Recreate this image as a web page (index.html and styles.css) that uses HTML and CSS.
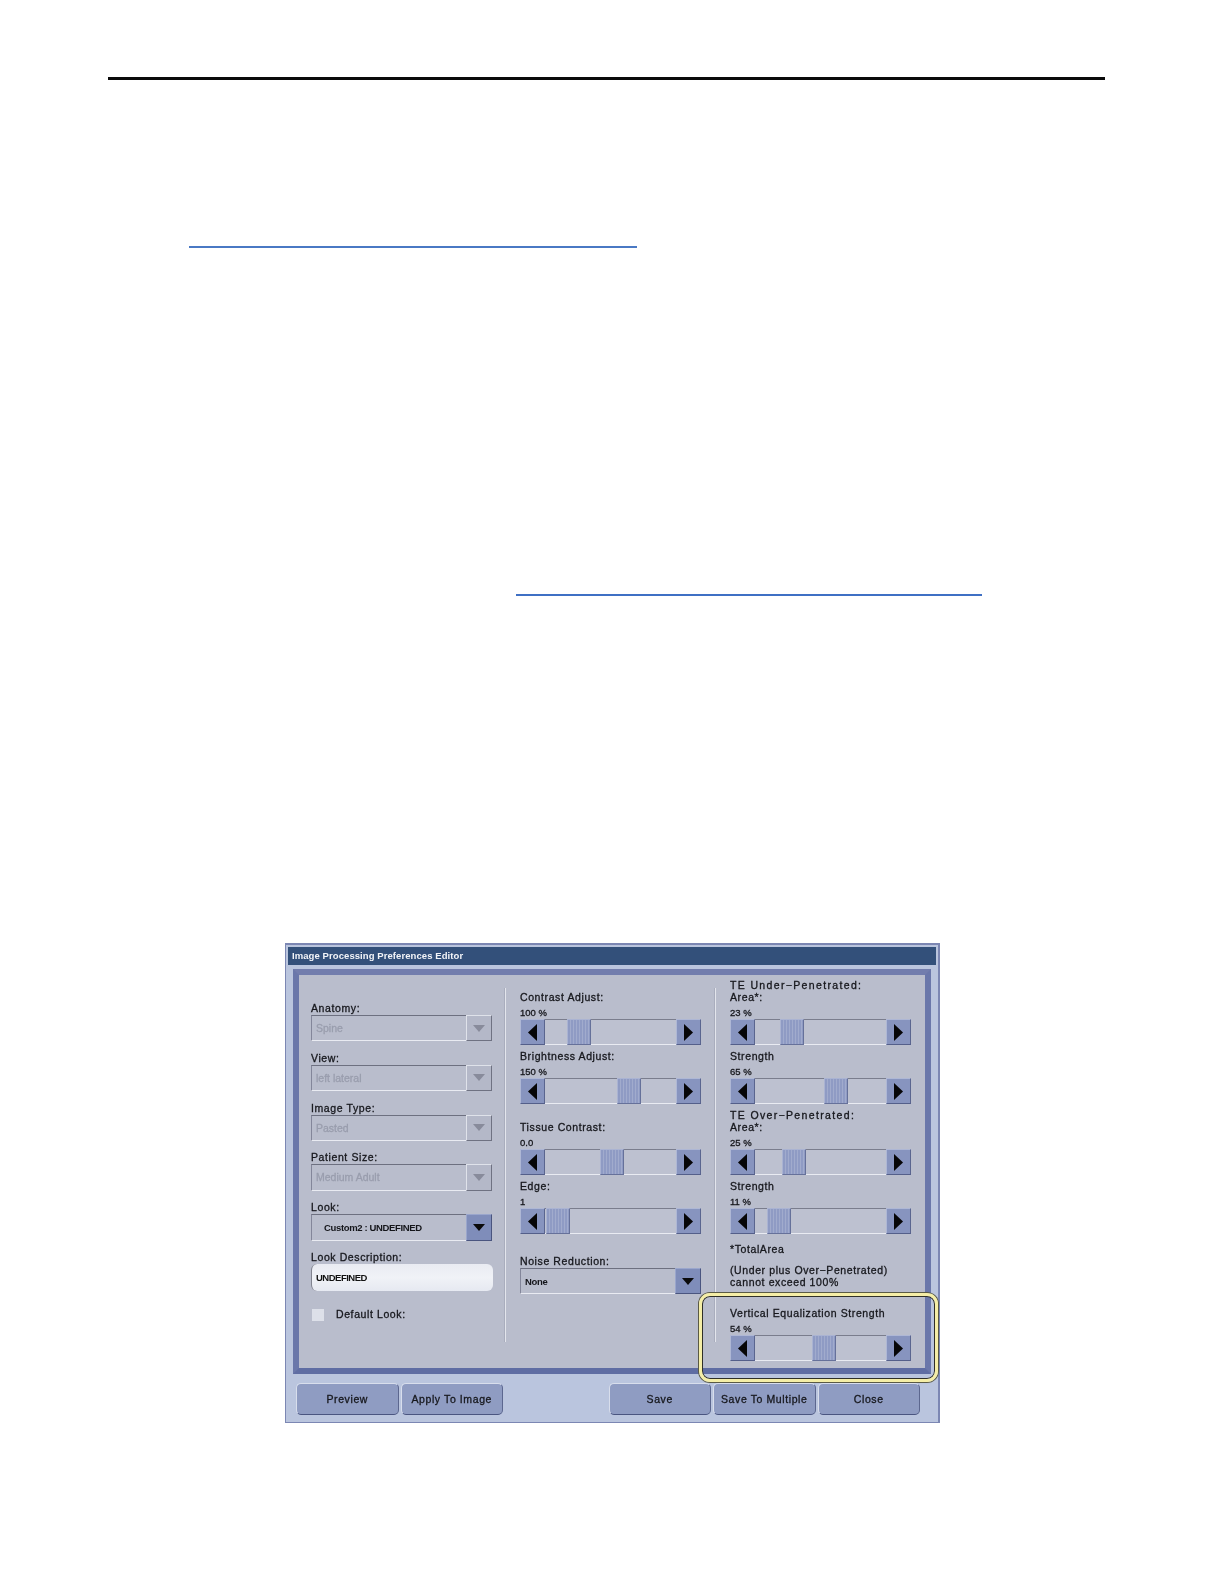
FILE: index.html
```html
<!DOCTYPE html>
<html lang="en">
<head>
<meta charset="utf-8">
<title>Image Processing Preferences Editor</title>
<link rel="stylesheet" href="styles.css">
</head>
<body>
<div class="page">
  <hr class="head-rule">
  <a class="link-rule link-one"></a>
  <a class="link-rule link-two"></a>

  <section class="dialog">
    <div class="titlebar">Image Processing Preferences Editor</div>
    <div class="panel">
      <div class="col col-left">
        <div class="field"><div class="lbl">Anatomy:</div>
          <div class="combo off"><span class="combo-text">Spine</span><span class="combo-btn"><svg width="12" height="7" viewBox="0 0 12 7"><polygon points="0,0 12,0 6,7"/></svg></span></div></div>
        <div class="field"><div class="lbl">View:</div>
          <div class="combo off"><span class="combo-text">left lateral</span><span class="combo-btn"><svg width="12" height="7" viewBox="0 0 12 7"><polygon points="0,0 12,0 6,7"/></svg></span></div></div>
        <div class="field"><div class="lbl">Image Type:</div>
          <div class="combo off"><span class="combo-text">Pasted</span><span class="combo-btn"><svg width="12" height="7" viewBox="0 0 12 7"><polygon points="0,0 12,0 6,7"/></svg></span></div></div>
        <div class="field"><div class="lbl">Patient Size:</div>
          <div class="combo off"><span class="combo-text">Medium Adult</span><span class="combo-btn"><svg width="12" height="7" viewBox="0 0 12 7"><polygon points="0,0 12,0 6,7"/></svg></span></div></div>
        <div class="field"><div class="lbl">Look:</div>
          <div class="combo on"><span class="combo-text indent">Custom2 : UNDEFINED</span><span class="combo-btn"><svg width="12" height="7" viewBox="0 0 12 7"><polygon points="0,0 12,0 6,7"/></svg></span></div></div>
        <div class="field"><div class="lbl">Look Description:</div>
          <div class="textbox">UNDEFINED</div></div>
        <label class="check"><span class="box"></span><span class="lbl">Default Look:</span></label>
      </div>

      <div class="divider"></div>

      <div class="col col-mid">
        <div class="group"><div class="lbl">Contrast Adjust:</div><div class="pct">100 %</div>
          <div class="slider"><span class="sbtn"><svg width="9" height="17" viewBox="0 0 9 17"><polygon points="9,0 9,17 0,8.5"/></svg></span><span class="track"><span class="thumb" style="margin-left:22px"></span></span><span class="sbtn"><svg width="9" height="17" viewBox="0 0 9 17"><polygon points="0,0 0,17 9,8.5"/></svg></span></div></div>
        <div class="group near"><div class="lbl">Brightness Adjust:</div><div class="pct">150 %</div>
          <div class="slider"><span class="sbtn"><svg width="9" height="17" viewBox="0 0 9 17"><polygon points="9,0 9,17 0,8.5"/></svg></span><span class="track"><span class="thumb" style="margin-left:72px"></span></span><span class="sbtn"><svg width="9" height="17" viewBox="0 0 9 17"><polygon points="0,0 0,17 9,8.5"/></svg></span></div></div>
        <div class="group far"><div class="lbl">Tissue Contrast:</div><div class="pct">0.0</div>
          <div class="slider"><span class="sbtn"><svg width="9" height="17" viewBox="0 0 9 17"><polygon points="9,0 9,17 0,8.5"/></svg></span><span class="track"><span class="thumb" style="margin-left:55px"></span></span><span class="sbtn"><svg width="9" height="17" viewBox="0 0 9 17"><polygon points="0,0 0,17 9,8.5"/></svg></span></div></div>
        <div class="group near"><div class="lbl">Edge:</div><div class="pct">1</div>
          <div class="slider"><span class="sbtn"><svg width="9" height="17" viewBox="0 0 9 17"><polygon points="9,0 9,17 0,8.5"/></svg></span><span class="track"><span class="thumb" style="margin-left:1px"></span></span><span class="sbtn"><svg width="9" height="17" viewBox="0 0 9 17"><polygon points="0,0 0,17 9,8.5"/></svg></span></div></div>
        <div class="noise"><div class="lbl">Noise Reduction:</div>
          <div class="combo on"><span class="combo-text">None</span><span class="combo-btn"><svg width="12" height="7" viewBox="0 0 12 7"><polygon points="0,0 12,0 6,7"/></svg></span></div></div>
      </div>

      <div class="divider"></div>

      <div class="col col-right">
        <div class="lbl heading">TE Under&#8722;Penetrated:</div>
        <div class="group"><div class="lbl">Area*:</div><div class="pct">23 %</div>
          <div class="slider"><span class="sbtn"><svg width="9" height="17" viewBox="0 0 9 17"><polygon points="9,0 9,17 0,8.5"/></svg></span><span class="track"><span class="thumb" style="margin-left:25px"></span></span><span class="sbtn"><svg width="9" height="17" viewBox="0 0 9 17"><polygon points="0,0 0,17 9,8.5"/></svg></span></div></div>
        <div class="group near"><div class="lbl">Strength</div><div class="pct">65 %</div>
          <div class="slider"><span class="sbtn"><svg width="9" height="17" viewBox="0 0 9 17"><polygon points="9,0 9,17 0,8.5"/></svg></span><span class="track"><span class="thumb" style="margin-left:69px"></span></span><span class="sbtn"><svg width="9" height="17" viewBox="0 0 9 17"><polygon points="0,0 0,17 9,8.5"/></svg></span></div></div>
        <div class="lbl heading heading-over">TE Over&#8722;Penetrated:</div>
        <div class="group"><div class="lbl">Area*:</div><div class="pct">25 %</div>
          <div class="slider"><span class="sbtn"><svg width="9" height="17" viewBox="0 0 9 17"><polygon points="9,0 9,17 0,8.5"/></svg></span><span class="track"><span class="thumb" style="margin-left:27px"></span></span><span class="sbtn"><svg width="9" height="17" viewBox="0 0 9 17"><polygon points="0,0 0,17 9,8.5"/></svg></span></div></div>
        <div class="group near"><div class="lbl">Strength</div><div class="pct">11 %</div>
          <div class="slider"><span class="sbtn"><svg width="9" height="17" viewBox="0 0 9 17"><polygon points="9,0 9,17 0,8.5"/></svg></span><span class="track"><span class="thumb" style="margin-left:12px"></span></span><span class="sbtn"><svg width="9" height="17" viewBox="0 0 9 17"><polygon points="0,0 0,17 9,8.5"/></svg></span></div></div>
        <div class="lbl note-head">*TotalArea</div>
        <div class="lbl note">(Under plus Over&#8722;Penetrated)</div>
        <div class="lbl note-end">cannot exceed 100%</div>
        <div class="group vertical"><div class="lbl">Vertical Equalization Strength</div><div class="pct">54 %</div>
          <div class="slider"><span class="sbtn"><svg width="9" height="17" viewBox="0 0 9 17"><polygon points="9,0 9,17 0,8.5"/></svg></span><span class="track"><span class="thumb" style="margin-left:57px"></span></span><span class="sbtn"><svg width="9" height="17" viewBox="0 0 9 17"><polygon points="0,0 0,17 9,8.5"/></svg></span></div></div>
      </div>
    </div>

    <div class="actions">
      <button class="btn">Preview</button>
      <button class="btn">Apply To Image</button>
      <button class="btn push">Save</button>
      <button class="btn">Save To Multiple</button>
      <button class="btn">Close</button>
    </div>

    <div class="callout"></div>
  </section>
</div>
</body>
</html>
```

FILE: styles.css
```css
* { box-sizing: border-box; }
html, body { margin: 0; padding: 0; background: #fff; }
.page { width: 1224px; height: 1584px; overflow: hidden; padding-top: 77px; font-family: "Liberation Sans", Arial, sans-serif; }

.head-rule { width: 997px; height: 3px; margin: 0 0 0 108px; border: 0; background: #0a0a0a; }
.link-rule { display: block; height: 2px; background: #4a79c4; }
.link-one { width: 448px; margin: 166px 0 0 189px; }
.link-two { width: 466px; margin: 346px 0 0 516px; background: #3f70c4; }

.dialog { position: relative; width: 655px; height: 480px; margin: 347px 0 0 285px; padding: 2px 2px 0 2px; background: #bac5de; border: 1px solid #7c87b3; border-width: 2px 2px 1px 1px; filter: blur(0.3px); color: #16171c; font-size: 10.5px; }

.titlebar { height: 18px; line-height: 18px; padding-left: 4px; background: #33507a; color: #f2f4f8; font-size: 9.5px; font-weight: bold; letter-spacing: 0.08px; }

.panel { display: flex; height: 405px; margin: 4px 5px 0 5px; border: 6px solid #6d7aab; border-color: #727dad #6a77aa #5f6da3 #6a77aa; background: #b9bdcc; }

.col { display: flex; flex-direction: column; }
.col-left { width: 206px; padding: 27px 0 0 12px; }
.col-mid { width: 209px; padding: 16px 0 0 14px; }
.col-right { width: 208px; padding: 4px 0 0 14px; }
.divider { width: 1px; height: 354px; margin-top: 13px; background: #e3e5ec; box-shadow: -1px 0 0 #a9adbd; }

.lbl { height: 13px; line-height: 13px; font-size: 10.5px; letter-spacing: 0.6px; white-space: nowrap; -webkit-text-stroke: 0.3px #16171c; }
.pct { height: 12px; line-height: 12px; margin-top: 3px; font-size: 9.5px; -webkit-text-stroke: 0.3px #16171c; }

.field { margin-bottom: 10.4px; }
.combo { display: flex; align-items: stretch; height: 26.4px; width: 181px; border-top: 1px solid #6d7080; border-left: 1px solid #83869a; border-bottom: 1px solid #e9ebf2; }
.combo-text { flex: 1; padding-left: 4px; line-height: 25px; font-size: 9.5px; font-weight: bold; letter-spacing: -0.35px; color: #14151a; }
.combo-text.indent { padding-left: 12px; }
.off .combo-text { color: #999dad; font-size: 10.5px; font-weight: normal; letter-spacing: 0; -webkit-text-stroke: 0.3px #999dad; }
.combo-btn { display: flex; align-items: center; justify-content: center; width: 26px; margin: -1px 0 -1px; border: 1px solid; border-color: #dfe2ea #6f7282 #6f7282 #dfe2ea; }
.on .combo-btn { background: #7f8dba; border-color: #9aa6cc #4a557f #4a557f #9aa6cc; }
.off .combo-btn { background: #b4b8c8; }
.off svg { fill: #888b9b; }
.on svg { fill: #0a0a0c; }

.textbox { width: 182px; height: 27px; padding-left: 4px; line-height: 27px; border-radius: 6px; background: linear-gradient(180deg, #e9ebf2, #f0f2f7 50%, #e6e9f1); border-left: 1px solid #80838f; font-size: 9.5px; font-weight: bold; letter-spacing: -0.5px; color: #111; }

.check { display: flex; align-items: center; margin-top: 7px; margin-left: 1px; }
.box { width: 12px; height: 12px; margin-right: 12px; background: #dde0e9; }

.group { display: flex; flex-direction: column; }
.near { margin-top: 5px; }
.far { margin-top: 17px; }
.slider { display: flex; width: 181px; height: 26px; border-top: 1px solid #7a7d8d; border-bottom: 1px solid #e9ebf2; }
.sbtn { display: flex; flex: none; align-items: center; justify-content: center; width: 25px; height: 26px; margin-top: -1px; background: #8794bf; border: 1px solid; border-color: #aeb7d5 #5a658f #545f8a #aeb7d5; }
.sbtn svg { fill: #060608; }
.track { display: block; flex: 1; min-width: 0; background: #bdc1d0; }
.thumb { display: block; width: 24px; height: 26px; margin-top: -1px; border: 1px solid; border-color: #aab3d2 #66719a #66719a #aab3d2; background: repeating-linear-gradient(90deg, #8f9bc4 0 2px, #a1abcd 2px 3px); }

.noise { margin-top: 21px; }
.heading { margin-bottom: -1px; letter-spacing: 1.35px; }
.heading-over { margin-top: 5px; }
.note-head { margin-top: 9px; }
.note { margin-top: 8px; }
.note-end { margin-top: -1px; }
.vertical { margin-top: 18px; }

.actions { display: flex; gap: 2px; height: 33px; margin-top: 9px; padding: 0 16px 0 8px; }
.btn { width: 102.5px; height: 32px; padding: 0; border: 1px solid; border-color: #d8deec #5c678f #4a5580 #d8deec; border-radius: 5px; background: #8f9cc2; color: #16171c; font: 10.5px "Liberation Sans", Arial, sans-serif; letter-spacing: 0.6px; -webkit-text-stroke: 0.3px #16171c; }
.push { margin-left: auto; }

.callout { position: absolute; left: 413px; top: 348px; width: 239px; height: 89px; border: 3px solid #f5eea6; border-radius: 11px; box-shadow: 0 0 0 1px #5a5a45, inset 0 0 0 1px #2f2f28; }
```
